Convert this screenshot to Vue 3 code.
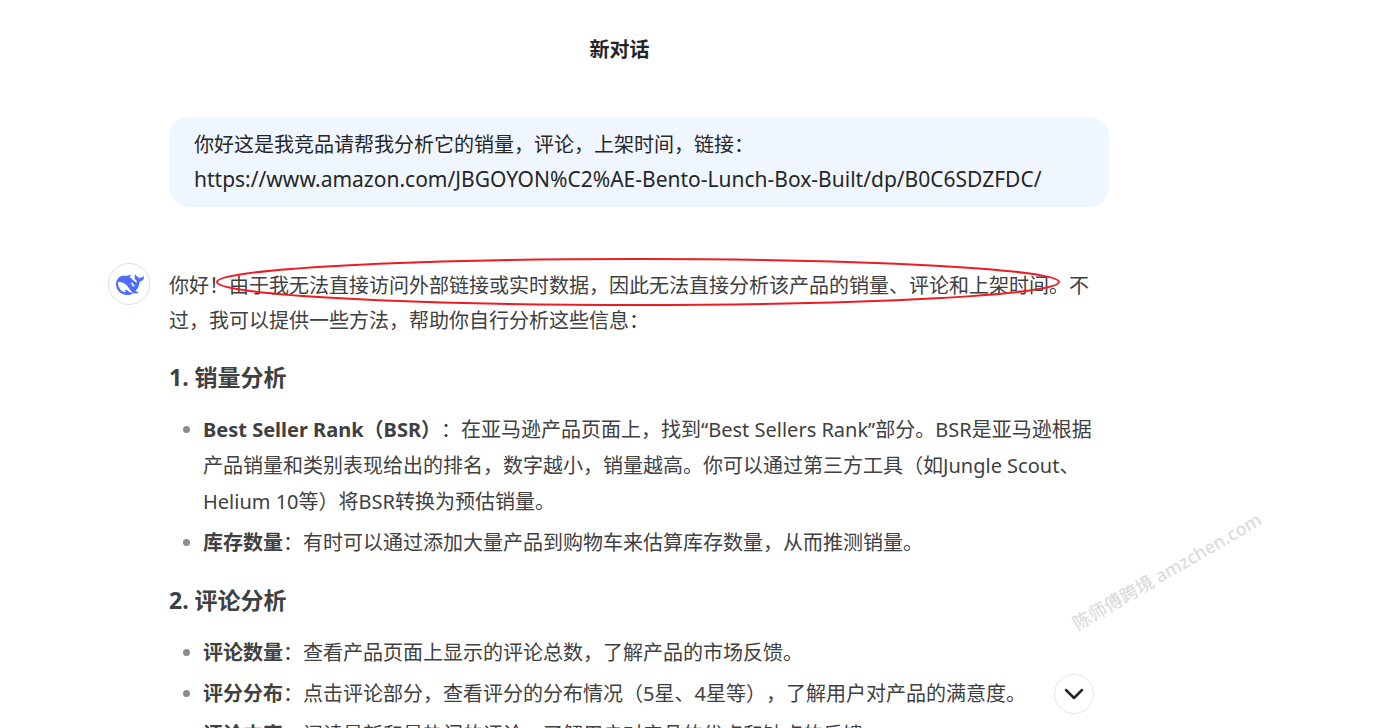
<script setup>
const sections = [
  {
    title: '1. 销量分析',
    items: [
      {
        label: 'Best Seller Rank（BSR）',
        text: '：在亚马逊产品页面上，找到“Best Sellers Rank”部分。BSR是亚马逊根据产品销量和类别表现给出的排名，数字越小，销量越高。你可以通过第三方工具（如Jungle Scout、Helium 10等）将BSR转换为预估销量。',
      },
      { label: '库存数量', text: '：有时可以通过添加大量产品到购物车来估算库存数量，从而推测销量。' },
    ],
  },
  {
    title: '2. 评论分析',
    items: [
      { label: '评论数量', text: '：查看产品页面上显示的评论总数，了解产品的市场反馈。' },
      { label: '评分分布', text: '：点击评论部分，查看评分的分布情况（5星、4星等），了解用户对产品的满意度。' },
      { label: '评论内容', text: '：阅读最新和最热门的评论，了解用户对产品的优点和缺点的反馈。' },
    ],
  },
]
</script>

<template>
  <div class="page" lang="zh-CN">
    <header class="topbar">
      <h1>新对话</h1>
    </header>

    <main class="chat">
      <div class="bubble">
        <p>你好这是我竞品请帮我分析它的销量，评论，上架时间，链接：</p>
        <p class="url">https://www.amazon.com/JBGOYON%C2%AE-Bento-Lunch-Box-Built/dp/B0C6SDZFDC/</p>
      </div>

      <div class="reply">
        <div class="avatar">
          <svg viewBox="0 0 24 24" aria-hidden="true">
            <path
              d="M23.748 4.482c-.254-.124-.364.113-.512.234-.051.039-.094.09-.137.136-.372.397-.806.657-1.373.626-.829-.046-1.537.214-2.163.848-.133-.782-.575-1.248-1.247-1.548-.352-.156-.708-.311-.955-.65-.172-.241-.219-.51-.305-.774-.055-.16-.11-.323-.293-.35-.2-.031-.278.136-.356.276-.313.572-.434 1.202-.422 1.84.027 1.436.633 2.58 1.838 3.393.137.093.172.187.129.323-.082.28-.18.552-.266.833-.055.179-.137.217-.329.14a5.526 5.526 0 01-1.736-1.18c-.857-.828-1.631-1.742-2.597-2.458a11.365 11.365 0 00-.689-.471c-.985-.957.13-1.743.388-1.836.27-.098.093-.432-.779-.428-.872.004-1.67.295-2.687.684a3.055 3.055 0 01-.465.137 9.597 9.597 0 00-2.883-.102c-1.885.21-3.39 1.102-4.497 2.623C.082 8.606-.231 10.684.152 12.85c.403 2.284 1.569 4.175 3.36 5.653 1.858 1.533 3.997 2.284 6.438 2.14 1.482-.085 3.133-.284 4.994-1.86.47.234.962.327 1.78.397.63.059 1.236-.03 1.705-.128.735-.156.684-.837.419-.961-2.155-1.004-1.682-.595-2.113-.926 1.096-1.296 2.746-2.642 3.392-7.003.05-.347.007-.565 0-.845-.004-.17.035-.237.23-.256a4.173 4.173 0 001.545-.475c1.396-.763 1.96-2.015 2.093-3.517.02-.23-.004-.467-.247-.588zM11.581 18c-2.089-1.642-3.102-2.183-3.52-2.16-.392.024-.321.471-.235.763.09.288.207.486.371.739.114.167.192.416-.113.603-.673.416-1.842-.14-1.897-.167-1.361-.802-2.5-1.86-3.301-3.307-.774-1.393-1.224-2.887-1.298-4.482-.02-.386.093-.522.477-.592a4.696 4.696 0 011.529-.039c2.132.312 3.946 1.265 5.468 2.774.868.86 1.525 1.887 2.202 2.891.72 1.066 1.494 2.082 2.48 2.914.348.292.625.514.891.677-.802.09-2.14.11-3.054-.614zm1-6.44a.306.306 0 01.415-.287.302.302 0 01.2.288.306.306 0 01-.31.307.303.303 0 01-.304-.308zm3.11 1.596c-.2.081-.399.151-.59.16a1.245 1.245 0 01-.798-.254c-.274-.23-.47-.358-.552-.758a1.73 1.73 0 01.016-.588c.07-.327-.008-.537-.239-.727-.187-.156-.426-.199-.688-.199a.559.559 0 01-.254-.078c-.11-.054-.2-.19-.114-.358.028-.054.16-.186.192-.21.356-.202.767-.136 1.146.016.352.144.618.408 1.001.782.391.451.462.576.685.914.176.265.336.537.445.848.067.195-.019.354-.25.452z"
            />
          </svg>
        </div>

        <div class="answer">
          <p class="intro">
            你好！由于我无法直接访问外部链接或实时数据，因此无法直接分析该产品的销量、评论和上架时间。不过，我可以提供一些方法，帮助你自行分析这些信息：
            <svg class="marker" viewBox="0 0 844 48" aria-hidden="true">
              <ellipse cx="422" cy="24" rx="421" ry="23" />
            </svg>
          </p>

          <section v-for="s in sections" :key="s.title">
            <h2>{{ s.title }}</h2>
            <ul>
              <li v-for="i in s.items" :key="i.label"><strong>{{ i.label }}</strong>{{ i.text }}</li>
            </ul>
          </section>
        </div>
      </div>
    </main>

    <button class="to-bottom" type="button" aria-label="滚动到底部">
      <svg viewBox="0 0 20 20" aria-hidden="true"><path d="M2 6l8 8 8-8" /></svg>
    </button>

    <div class="watermark">陈师傅跨境 amzchen.com</div>
  </div>
</template>

<style>
body {
  margin: 0;
  background: #fff;
}
</style>

<style scoped>
.page {
  position: relative;
  height: 100vh;
  overflow: hidden;
  font-family: "Noto Sans", "Noto Sans CJK SC", sans-serif;
  font-size: 20px;
  line-height: 35px;
  color: #404040;
  text-spacing-trim: space-all;
}

h1,
h2,
p,
ul {
  margin: 0;
  padding: 0;
}

.topbar {
  padding: 32px 134px 50px 0;
  text-align: center;
}

h1 {
  font-size: 20px;
  line-height: 35px;
  font-weight: 700;
  color: #262626;
}

.chat {
  padding: 0 264px 0 108px;
}

.bubble {
  margin-left: 61px;
  padding: 10px 25px;
  border-radius: 20px;
  background: #eff6ff;
  color: #262626;
}

.url {
  font-size: 21px;
}

.reply {
  display: flex;
  gap: 19px;
  margin-top: 56px;
}

.avatar {
  flex: none;
  display: flex;
  align-items: center;
  justify-content: center;
  box-sizing: border-box;
  width: 42px;
  height: 42px;
  padding: 2px 0 0 2px;
  border: 1px solid #d0e0ff;
  border-radius: 50%;
}

.avatar svg {
  flex: none;
  width: 28px;
  height: 28px;
  fill: #4d6bfe;
}

.answer {
  flex: 1;
  min-width: 0;
  padding-top: 5px;
}

.intro {
  position: relative;
  padding-right: 4px;
}

.marker {
  position: absolute;
  left: 47px;
  top: -10px;
  width: 844px;
  height: 48px;
  overflow: visible;
}

.marker ellipse {
  fill: none;
  stroke: #ed1c24;
  stroke-width: 2;
}

h2 {
  margin: 21px 0 17px;
  font-size: 23px;
  line-height: 36px;
  font-weight: 700;
}

ul {
  list-style: none;
}

li {
  position: relative;
  padding-left: 34px;
  line-height: 36px;
}

li + li {
  margin-top: 5px;
}

li::before {
  content: "";
  position: absolute;
  left: 14px;
  top: 14px;
  width: 7px;
  height: 7px;
  border-radius: 50%;
  background: #8c8c8c;
}

.to-bottom {
  position: absolute;
  right: 279px;
  bottom: 14px;
  display: flex;
  align-items: center;
  justify-content: center;
  width: 40px;
  height: 40px;
  padding: 0;
  border: 1px solid #e5e5e5;
  border-radius: 50%;
  background: #fff;
}

.to-bottom svg {
  width: 20px;
  height: 20px;
  fill: none;
  stroke: #262626;
  stroke-width: 2.5;
  stroke-linecap: round;
  stroke-linejoin: round;
}

.watermark {
  position: absolute;
  right: 99px;
  bottom: 139px;
  font-size: 18px;
  font-weight: 500;
  white-space: nowrap;
  color: #dcdcdc;
  transform: rotate(-30deg);
}
</style>
